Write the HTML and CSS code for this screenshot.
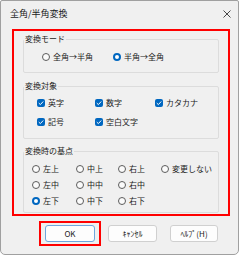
FILE: index.html
```html
<!DOCTYPE html>
<html lang="ja">
<head>
  <meta charset="UTF-8" />
  <title>全角/半角変換</title>
  <link rel="stylesheet" href="styles.css">
</head>
<body>

  <div class="window">
    <div class="titlebar">
      <span class="title">全角/半角変換</span>
      <svg class="close" width="8" height="8" viewBox="0 0 8 8">
        <path d="M0.5 0.5 L7.5 7.5 M7.5 0.5 L0.5 7.5" stroke="#333" stroke-width="0.9" fill="none" />
      </svg>
    </div>

    <div class="highlight">
      <fieldset class="group group-mode">
        <legend>変換モード</legend>
        <div class="mode-row">
          <label class="opt"><span class="radio"></span>全角→半角</label>
          <label class="opt"><span class="radio on"></span>半角→全角</label>
        </div>
      </fieldset>

      <fieldset class="group group-target">
        <legend>変換対象</legend>
        <div class="target-grid">
          <label class="opt"><span class="check"><svg viewBox="0 0 9 9"><path d="M2 4.6 L3.8 6.3 L7 2.8" /></svg></span>英字</label>
          <label class="opt"><span class="check"><svg viewBox="0 0 9 9"><path d="M2 4.6 L3.8 6.3 L7 2.8" /></svg></span>数字</label>
          <label class="opt"><span class="check"><svg viewBox="0 0 9 9"><path d="M2 4.6 L3.8 6.3 L7 2.8" /></svg></span>カタカナ</label>
          <label class="opt"><span class="check"><svg viewBox="0 0 9 9"><path d="M2 4.6 L3.8 6.3 L7 2.8" /></svg></span>記号</label>
          <label class="opt"><span class="check"><svg viewBox="0 0 9 9"><path d="M2 4.6 L3.8 6.3 L7 2.8" /></svg></span>空白文字</label>
        </div>
      </fieldset>

      <fieldset class="group group-base">
        <legend>変換時の基点</legend>
        <div class="base-grid">
          <label class="opt"><span class="radio"></span>左上</label>
          <label class="opt"><span class="radio"></span>中上</label>
          <label class="opt"><span class="radio"></span>右上</label>
          <label class="opt"><span class="radio"></span>変更しない</label>
          <label class="opt"><span class="radio"></span>左中</label>
          <label class="opt"><span class="radio"></span>中中</label>
          <label class="opt"><span class="radio"></span>右中</label>
          <span></span>
          <label class="opt"><span class="radio on"></span>左下</label>
          <label class="opt"><span class="radio"></span>中下</label>
          <label class="opt"><span class="radio"></span>右下</label>
        </div>
      </fieldset>
    </div>

    <div class="buttons">
      <div class="focus-ring"><button class="btn btn-default">OK</button></div>
      <button class="btn">ｷｬﾝｾﾙ</button>
      <button class="btn btn-help">ﾍﾙﾌﾟ(H)</button>
    </div>
  </div>

</body>
</html>
```

FILE: styles.css
```css
body {
  margin: 0;
  background-color: #ffffff;
  font-family: "Noto Sans CJK JP", "Noto Sans", sans-serif;
  font-size: 8px;
  line-height: 12px;
  color: #1b1b1b;
}

.window {
  box-sizing: border-box;
  width: 239px;
  height: 255px;
  border: 1px solid #a0a0a0;
  border-radius: 2px 2px 5px 5px;
  background-color: #f0f0f0;
}

.titlebar {
  height: 26px;
  display: flex;
  align-items: center;
  justify-content: space-between;
  padding: 0 7px 0 9px;
}

.title {
  font-size: 9px;
}

.highlight {
  box-sizing: border-box;
  width: 218px;
  margin: 2px 0 0 11px;
  padding: 2px 9px 1px;
  border: 2px solid #ff0000;
}

.group {
  margin: 0;
  padding: 0;
  border: 1px solid #dcdcdc;
  border-radius: 2px;
}

.group legend {
  margin-left: 0;
  padding: 0 1px;
  line-height: 12px;
  color: #222;
}

.group-mode {
  padding: 6px 0 9px 0;
}

.group-target {
  margin-top: 7px;
  padding: 5px 0 10px 0;
}

.group-base {
  margin-top: 6px;
  padding: 6px 0 5px 0;
}

.mode-row {
  display: grid;
  grid-template-columns: 71px auto;
  margin-left: 18px;
}

.target-grid {
  display: grid;
  grid-template-columns: 58px 60px auto;
  row-gap: 7px;
  margin-left: 13px;
}

.base-grid {
  display: grid;
  grid-template-columns: 44px 42px 43px auto;
  row-gap: 4px;
  margin-left: 8px;
}

.opt {
  display: flex;
  align-items: center;
  gap: 3px;
  height: 12px;
  white-space: nowrap;
}

.radio {
  box-sizing: border-box;
  width: 8px;
  height: 8px;
  border: 1px solid #5c5c5c;
  border-radius: 50%;
  background-color: #fbfbfb;
}

.radio.on {
  border: 2.5px solid #0067c0;
  background-color: #ffffff;
}

.check {
  box-sizing: border-box;
  width: 8px;
  height: 8px;
  border-radius: 2px;
  background-color: #0067c0;
  display: flex;
}

.check svg {
  width: 8px;
  height: 8px;
  fill: none;
  stroke: #ffffff;
  stroke-width: 1.1;
}

.buttons {
  display: flex;
  justify-content: flex-end;
  align-items: center;
  gap: 13px;
  margin-top: 5px;
  padding-right: 20px;
}

.focus-ring {
  margin: 0 -6px;
  padding: 2px 4px;
  border: 2px solid #ff0000;
  display: flex;
}

.btn {
  box-sizing: border-box;
  width: 49px;
  height: 17px;
  padding: 0;
  border: 1px solid #d0d0d0;
  border-radius: 3px;
  background-color: #fdfdfd;
  font-family: "Noto Sans CJK JP", "Noto Sans", sans-serif;
  font-size: 8px;
  font-weight: 400;
  color: #1b1b1b;
}

.btn-default {
  width: 50px;
  border-color: #6ea6dc;
}

.btn-help {
  width: 48px;
}
```
